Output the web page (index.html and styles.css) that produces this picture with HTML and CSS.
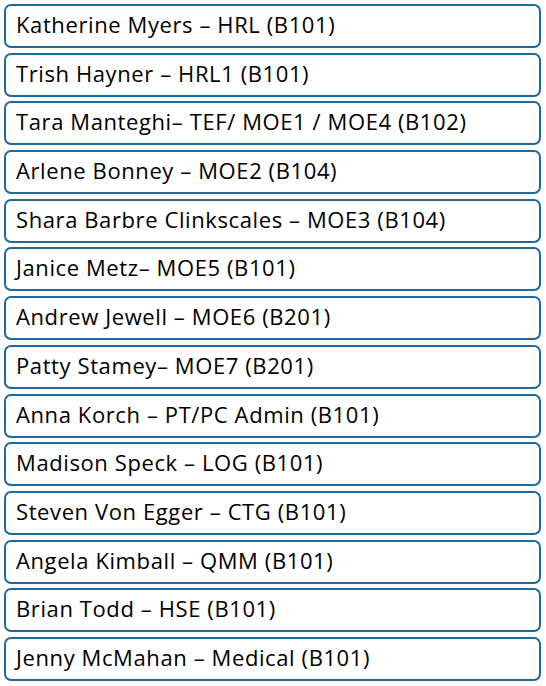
FILE: index.html
```html
<!DOCTYPE html>
<html>
<head>
<meta charset="utf-8">
<link rel="stylesheet" href="styles.css">
</head>
<body>
<ul class="list">
  <li class="item">Katherine Myers – HRL (B101)</li>
  <li class="item">Trish Hayner – HRL1 (B101)</li>
  <li class="item">Tara Manteghi– TEF/ MOE1 / MOE4 (B102)</li>
  <li class="item">Arlene Bonney – MOE2 (B104)</li>
  <li class="item">Shara Barbre Clinkscales – MOE3 (B104)</li>
  <li class="item">Janice Metz– MOE5 (B101)</li>
  <li class="item">Andrew Jewell – MOE6 (B201)</li>
  <li class="item">Patty Stamey– MOE7 (B201)</li>
  <li class="item">Anna Korch – PT/PC Admin (B101)</li>
  <li class="item">Madison Speck – LOG (B101)</li>
  <li class="item">Steven Von Egger – CTG (B101)</li>
  <li class="item">Angela Kimball – QMM (B101)</li>
  <li class="item">Brian Todd – HSE (B101)</li>
  <li class="item">Jenny McMahan – Medical (B101)</li>
</ul>
</body>
</html>
```
FILE: styles.css
```css
html, body {
  margin: 0;
  padding: 0;
  background: #ffffff;
}
.list {
  list-style: none;
  margin: 0;
  padding: 4px 5px 0 4px;
  display: flex;
  flex-direction: column;
  gap: 4.7px;
}
.item {
  box-sizing: border-box;
  height: 44px;
  border: 2px solid #1e6a9c;
  border-radius: 7px;
  padding: 0 10px 4px;
  display: flex;
  align-items: center;
  font-family: "Open Sans", "Noto Sans", sans-serif;
  font-size: 22px;
  letter-spacing: 0.6px;
  color: #000000;
  white-space: nowrap;
}
```
